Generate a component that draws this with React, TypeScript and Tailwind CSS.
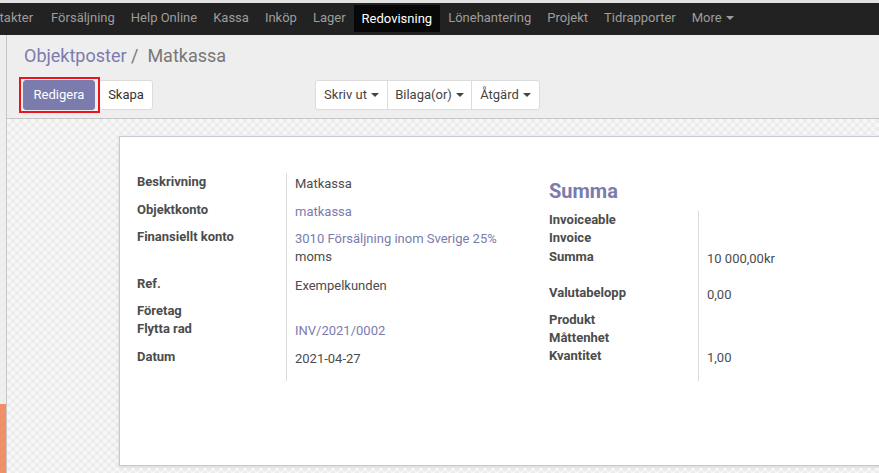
import React from "react";

const navItems = [
  "Kontakter",
  "Försäljning",
  "Help Online",
  "Kassa",
  "Inköp",
  "Lager",
  "Redovisning",
  "Lönehantering",
  "Projekt",
  "Tidrapporter",
];

function Caret({ color = "border-t-[#444]" }: { color?: string }) {
  return (
    <span
      className={`inline-block w-0 h-0 border-t-[4px] border-x-[4px] border-x-transparent ${color} ml-[4px] align-middle`}
    />
  );
}

type Row = { label: string; value?: string; link?: boolean; h: number; two?: string };

const leftRows: Row[] = [
  { label: "Beskrivning", value: "Matkassa", h: 28 },
  { label: "Objektkonto", value: "matkassa", link: true, h: 27 },
  { label: "Finansiellt konto", value: "3010 Försäljning inom Sverige 25%", two: "moms", link: true, h: 47 },
  { label: "Ref.", value: "Exempelkunden", h: 27 },
  { label: "Företag", h: 18 },
  { label: "Flytta rad", value: "INV/2021/0002", link: true, h: 28 },
  { label: "Datum", value: "2021-04-27", h: 33 },
];

const rightRows: Row[] = [
  { label: "Invoiceable", h: 18 },
  { label: "Invoice", h: 19 },
  { label: "Summa", value: "10 000,00kr", h: 36 },
  { label: "Valutabelopp", value: "0,00", h: 27 },
  { label: "Produkt", h: 18 },
  { label: "Måttenhet", h: 18 },
  { label: "Kvantitet", value: "1,00", h: 34 },
];

function Group({ rows }: { rows: Row[] }) {
  return (
    <div className="grid grid-cols-[149px_1fr]">
      {rows.map((r) => (
        <React.Fragment key={r.label}>
          <div
            className="font-bold text-[#4c4c4c] leading-[18px] text-[13px]"
            style={{ height: r.h }}
          >
            {r.label}
          </div>
          <div
            className="border-l border-[#dcdcdc] pl-[8px] pt-[2px] leading-[18px] text-[13px]"
            style={{ height: r.h }}
          >
            {r.value && (
              <div className={r.link ? "text-[#7c7bad]" : "text-[#4c4c4c]"}>{r.value}</div>
            )}
            {r.two && <div className="text-[#4c4c4c]">{r.two}</div>}
          </div>
        </React.Fragment>
      ))}
    </div>
  );
}

export default function App() {
  return (
    <div
      className="w-[879px] h-[473px] overflow-hidden bg-[#e2e2e2] flex flex-col"
      style={{ fontFamily: "Roboto, 'Liberation Sans', sans-serif" }}
    >
      {/* navbar */}
      <div className="mt-[3px] h-[32px] bg-[#222222] flex items-stretch shrink-0 text-[13px]">
        <div className="flex items-center ml-[-31px]">
          {navItems.map((n) => (
            <div
              key={n}
              className={
                n === "Redovisning"
                  ? "px-[8px] h-[27px] flex items-center bg-[#080808] text-white mt-[-1px]"
                  : n === "Kontakter"
                  ? "pl-[8px] pr-[10px] flex items-center text-[#9d9d9d] mt-[-2px]"
                  : "px-[8px] flex items-center text-[#9d9d9d] mt-[-2px]"
              }
            >
              {n}
            </div>
          ))}
          <div className="px-[8px] flex items-center text-[#9d9d9d] mt-[-2px]">
            More
            <Caret color="border-t-[#9d9d9d]" />
          </div>
        </div>
      </div>

      <div className="flex flex-1 min-h-0">
        {/* left strip */}
        <div className="w-[7px] border-r border-[#c6c6c6] bg-[#efeeee] flex flex-col shrink-0">
          <div className="flex-1" />
          <div className="h-[69px] bg-[#f0906a]" />
        </div>

        <div className="flex-1 flex flex-col min-w-0">
          {/* control panel */}
          <div className="h-[84px] bg-[#efeeee] border-b border-[#c5c5c5] pl-[16px] pt-[10px] shrink-0">
            <div className="text-[18px] leading-[22px] pl-[1px]">
              <span className="text-[#7c7bad]">Objektposter</span>
              <span className="text-[#777]"> /&nbsp; Matkassa</span>
            </div>
            <div className="flex items-center mt-[13px]">
              <div className="relative flex gap-[4px]">
                <button className="h-[30px] w-[72px] rounded-[3px] bg-[#7c7bad] text-white text-[13px] border border-[#7c7bad]">
                  Redigera
                </button>
                <div className="absolute left-[-4px] top-[-3px] w-[81px] h-[36px] border-2 border-[#e8161c] pointer-events-none" />
                <button className="h-[30px] w-[54px] rounded-[3px] bg-white text-[#333] text-[13px] border border-[#dcdcdc]">
                  Skapa
                </button>
              </div>
              <div className="ml-[162px] flex h-[30px] bg-white border border-[#dcdcdc] rounded-[3px] text-[13px] text-[#444]">
                <div className="w-[72px] flex items-center justify-center border-r border-[#dcdcdc]">
                  Skriv ut
                  <Caret />
                </div>
                <div className="w-[84px] flex items-center justify-center border-r border-[#dcdcdc]">
                  Bilaga(or)
                  <Caret />
                </div>
                <div className="w-[67px] flex items-center justify-center">
                  Åtgärd
                  <Caret />
                </div>
              </div>
            </div>
          </div>

          {/* form area */}
          <div className="flex-1 min-h-0 overflow-hidden pl-[112px] pt-[17px] bg-[conic-gradient(#ececec_25%,#f7f7f7_0_50%,#ececec_0_75%,#f7f7f7_0)] bg-[length:8px_8px]">
            <div className="w-[800px] h-[330px] bg-white border border-[#c8c8d2] shadow-[0_1px_3px_rgba(0,0,0,0.12)] pl-[17px] pt-[36px] flex">
              <div className="w-[412px]">
                <Group rows={leftRows} />
              </div>
              <div className="flex-1 pt-[5px]">
                <div className="text-[20px] font-bold text-[#7c7bad] leading-[26px] mb-[7px]">Summa</div>
                <Group rows={rightRows} />
              </div>
            </div>
          </div>
        </div>
      </div>
    </div>
  );
}
